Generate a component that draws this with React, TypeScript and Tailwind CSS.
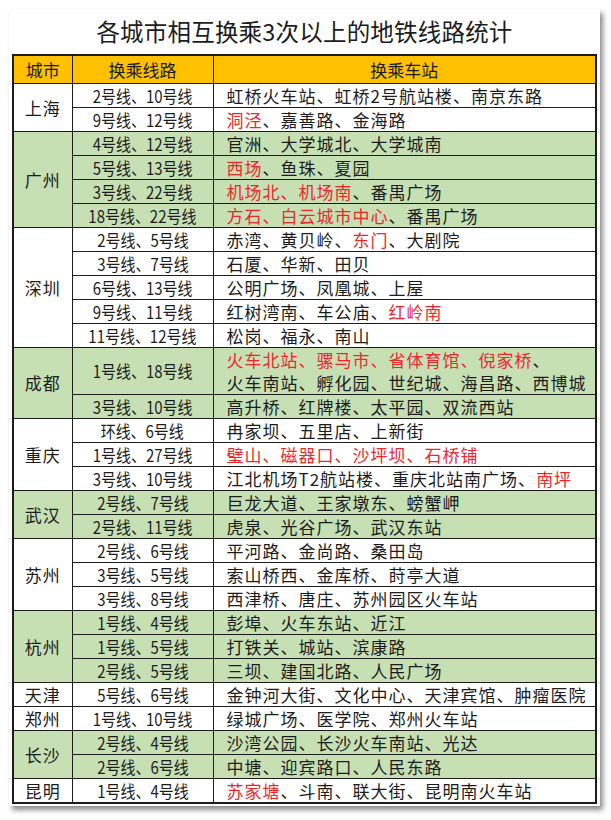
import React from "react";

type Seg = [string, boolean?];
type Row = { lines: string; stations: Seg[][]; tall?: boolean };
type City = { name: string; green?: boolean; rows: Row[] };

// 红字用 [text, true]
const r = (t: string): Seg => [t, true];
const b = (t: string): Seg => [t];

const CITIES: City[] = [
  {
    name: "上海",
    rows: [
      { lines: "2号线、10号线", stations: [[b("虹桥火车站、虹桥2号航站楼、南京东路")]] },
      { lines: "9号线、12号线", stations: [[r("洞泾"), b("、嘉善路、金海路")]] },
    ],
  },
  {
    name: "广州",
    green: true,
    rows: [
      { lines: "4号线、12号线", stations: [[b("官洲、大学城北、大学城南")]] },
      { lines: "5号线、13号线", stations: [[r("西场"), b("、鱼珠、夏园")]] },
      { lines: "3号线、22号线", stations: [[r("机场北、机场南"), b("、番禺广场")]] },
      { lines: "18号线、22号线", stations: [[r("方石、白云城市中心"), b("、番禺广场")]] },
    ],
  },
  {
    name: "深圳",
    rows: [
      { lines: "2号线、5号线", stations: [[b("赤湾、黄贝岭、"), r("东门"), b("、大剧院")]] },
      { lines: "3号线、7号线", stations: [[b("石厦、华新、田贝")]] },
      { lines: "6号线、13号线", stations: [[b("公明广场、凤凰城、上屋")]] },
      { lines: "9号线、11号线", stations: [[b("红树湾南、车公庙、"), r("红岭南")]] },
      { lines: "11号线、12号线", stations: [[b("松岗、福永、南山")]] },
    ],
  },
  {
    name: "成都",
    green: true,
    rows: [
      {
        lines: "1号线、18号线",
        tall: true,
        stations: [
          [r("火车北站、骡马市、省体育馆、倪家桥"), b("、")],
          [b("火车南站、孵化园、世纪城、海昌路、西博城")],
        ],
      },
      { lines: "3号线、10号线", stations: [[b("高升桥、红牌楼、太平园、双流西站")]] },
    ],
  },
  {
    name: "重庆",
    rows: [
      { lines: "环线、6号线", stations: [[b("冉家坝、五里店、上新街")]] },
      { lines: "1号线、27号线", stations: [[r("璧山、磁器口、沙坪坝、石桥铺")]] },
      { lines: "3号线、10号线", stations: [[b("江北机场T2航站楼、重庆北站南广场、"), r("南坪")]] },
    ],
  },
  {
    name: "武汉",
    green: true,
    rows: [
      { lines: "2号线、7号线", stations: [[b("巨龙大道、王家墩东、螃蟹岬")]] },
      { lines: "2号线、11号线", stations: [[b("虎泉、光谷广场、武汉东站")]] },
    ],
  },
  {
    name: "苏州",
    rows: [
      { lines: "2号线、6号线", stations: [[b("平河路、金尚路、桑田岛")]] },
      { lines: "3号线、5号线", stations: [[b("索山桥西、金库桥、莳亭大道")]] },
      { lines: "3号线、8号线", stations: [[b("西津桥、唐庄、苏州园区火车站")]] },
    ],
  },
  {
    name: "杭州",
    green: true,
    rows: [
      { lines: "1号线、4号线", stations: [[b("彭埠、火车东站、近江")]] },
      { lines: "1号线、5号线", stations: [[b("打铁关、城站、滨康路")]] },
      { lines: "2号线、5号线", stations: [[b("三坝、建国北路、人民广场")]] },
    ],
  },
  {
    name: "天津",
    rows: [{ lines: "5号线、6号线", stations: [[b("金钟河大街、文化中心、天津宾馆、肿瘤医院")]] }],
  },
  {
    name: "郑州",
    rows: [{ lines: "1号线、10号线", stations: [[b("绿城广场、医学院、郑州火车站")]] }],
  },
  {
    name: "长沙",
    green: true,
    rows: [
      { lines: "2号线、4号线", stations: [[b("沙湾公园、长沙火车南站、光达")]] },
      { lines: "2号线、6号线", stations: [[b("中塘、迎宾路口、人民东路")]] },
    ],
  },
  {
    name: "昆明",
    rows: [{ lines: "1号线、4号线", stations: [[r("苏家塘"), b("、斗南、联大街、昆明南火车站")]] }],
  },
];

const cell = "border border-[#1c1c1c] p-0";

export default function App() {
  return (
    <div
      className="min-h-screen bg-white p-[9px] text-[#1c1c1c]"
      style={{ fontFamily: '"Noto Sans CJK SC", "Noto Sans", sans-serif' }}
    >
      <div className="w-[591px] h-[797px] bg-white shadow-[3px_4px_5px_rgba(0,0,0,0.45)] px-[3px]">
        <h1 className="h-[45px] flex items-center justify-center text-[23.5px] font-normal tracking-[0.2px]">
          各城市相互换乘3次以上的地铁线路统计
        </h1>
        <table className="w-[585px] border-collapse table-fixed border-2 border-[#1c1c1c]">
          <colgroup>
            <col className="w-[59px]" />
            <col className="w-[141px]" />
            <col />
          </colgroup>
          <thead>
            <tr className="bg-[#ffc000] text-[17px]">
              <th className={`${cell} h-[28px] leading-none font-normal`}>城市</th>
              <th className={`${cell} leading-none font-normal`}>换乘线路</th>
              <th className={`${cell} leading-none font-normal`}>换乘车站</th>
            </tr>
          </thead>
          <tbody>
            {CITIES.map((city) =>
              city.rows.map((row, i) => (
                <tr key={city.name + i} className={city.green ? "bg-[#c6e0b4]" : "bg-white"}>
                  {i === 0 && (
                    <td
                      rowSpan={city.rows.length}
                      className={`${cell} text-center text-[17px] leading-none tracking-[1px]`}
                    >
                      {city.name}
                    </td>
                  )}
                  <td className={`${cell} text-center text-[17px] leading-none`}>
                    <span className="inline-block scale-x-[0.88] whitespace-nowrap">{row.lines}</span>
                  </td>
                  <td
                    className={`${cell} ${row.tall ? "h-[47px]" : "h-[23px]"} pl-[13px] text-[17px] tracking-[1px] leading-[23px] whitespace-nowrap`}
                  >
                    {row.stations.map((line, j) => (
                      <div key={j}>
                        {line.map(([t, red], k) => (
                          <span key={k} className={red ? "text-[#f0262b]" : ""}>
                            {t}
                          </span>
                        ))}
                      </div>
                    ))}
                  </td>
                </tr>
              ))
            )}
          </tbody>
        </table>
      </div>
    </div>
  );
}
